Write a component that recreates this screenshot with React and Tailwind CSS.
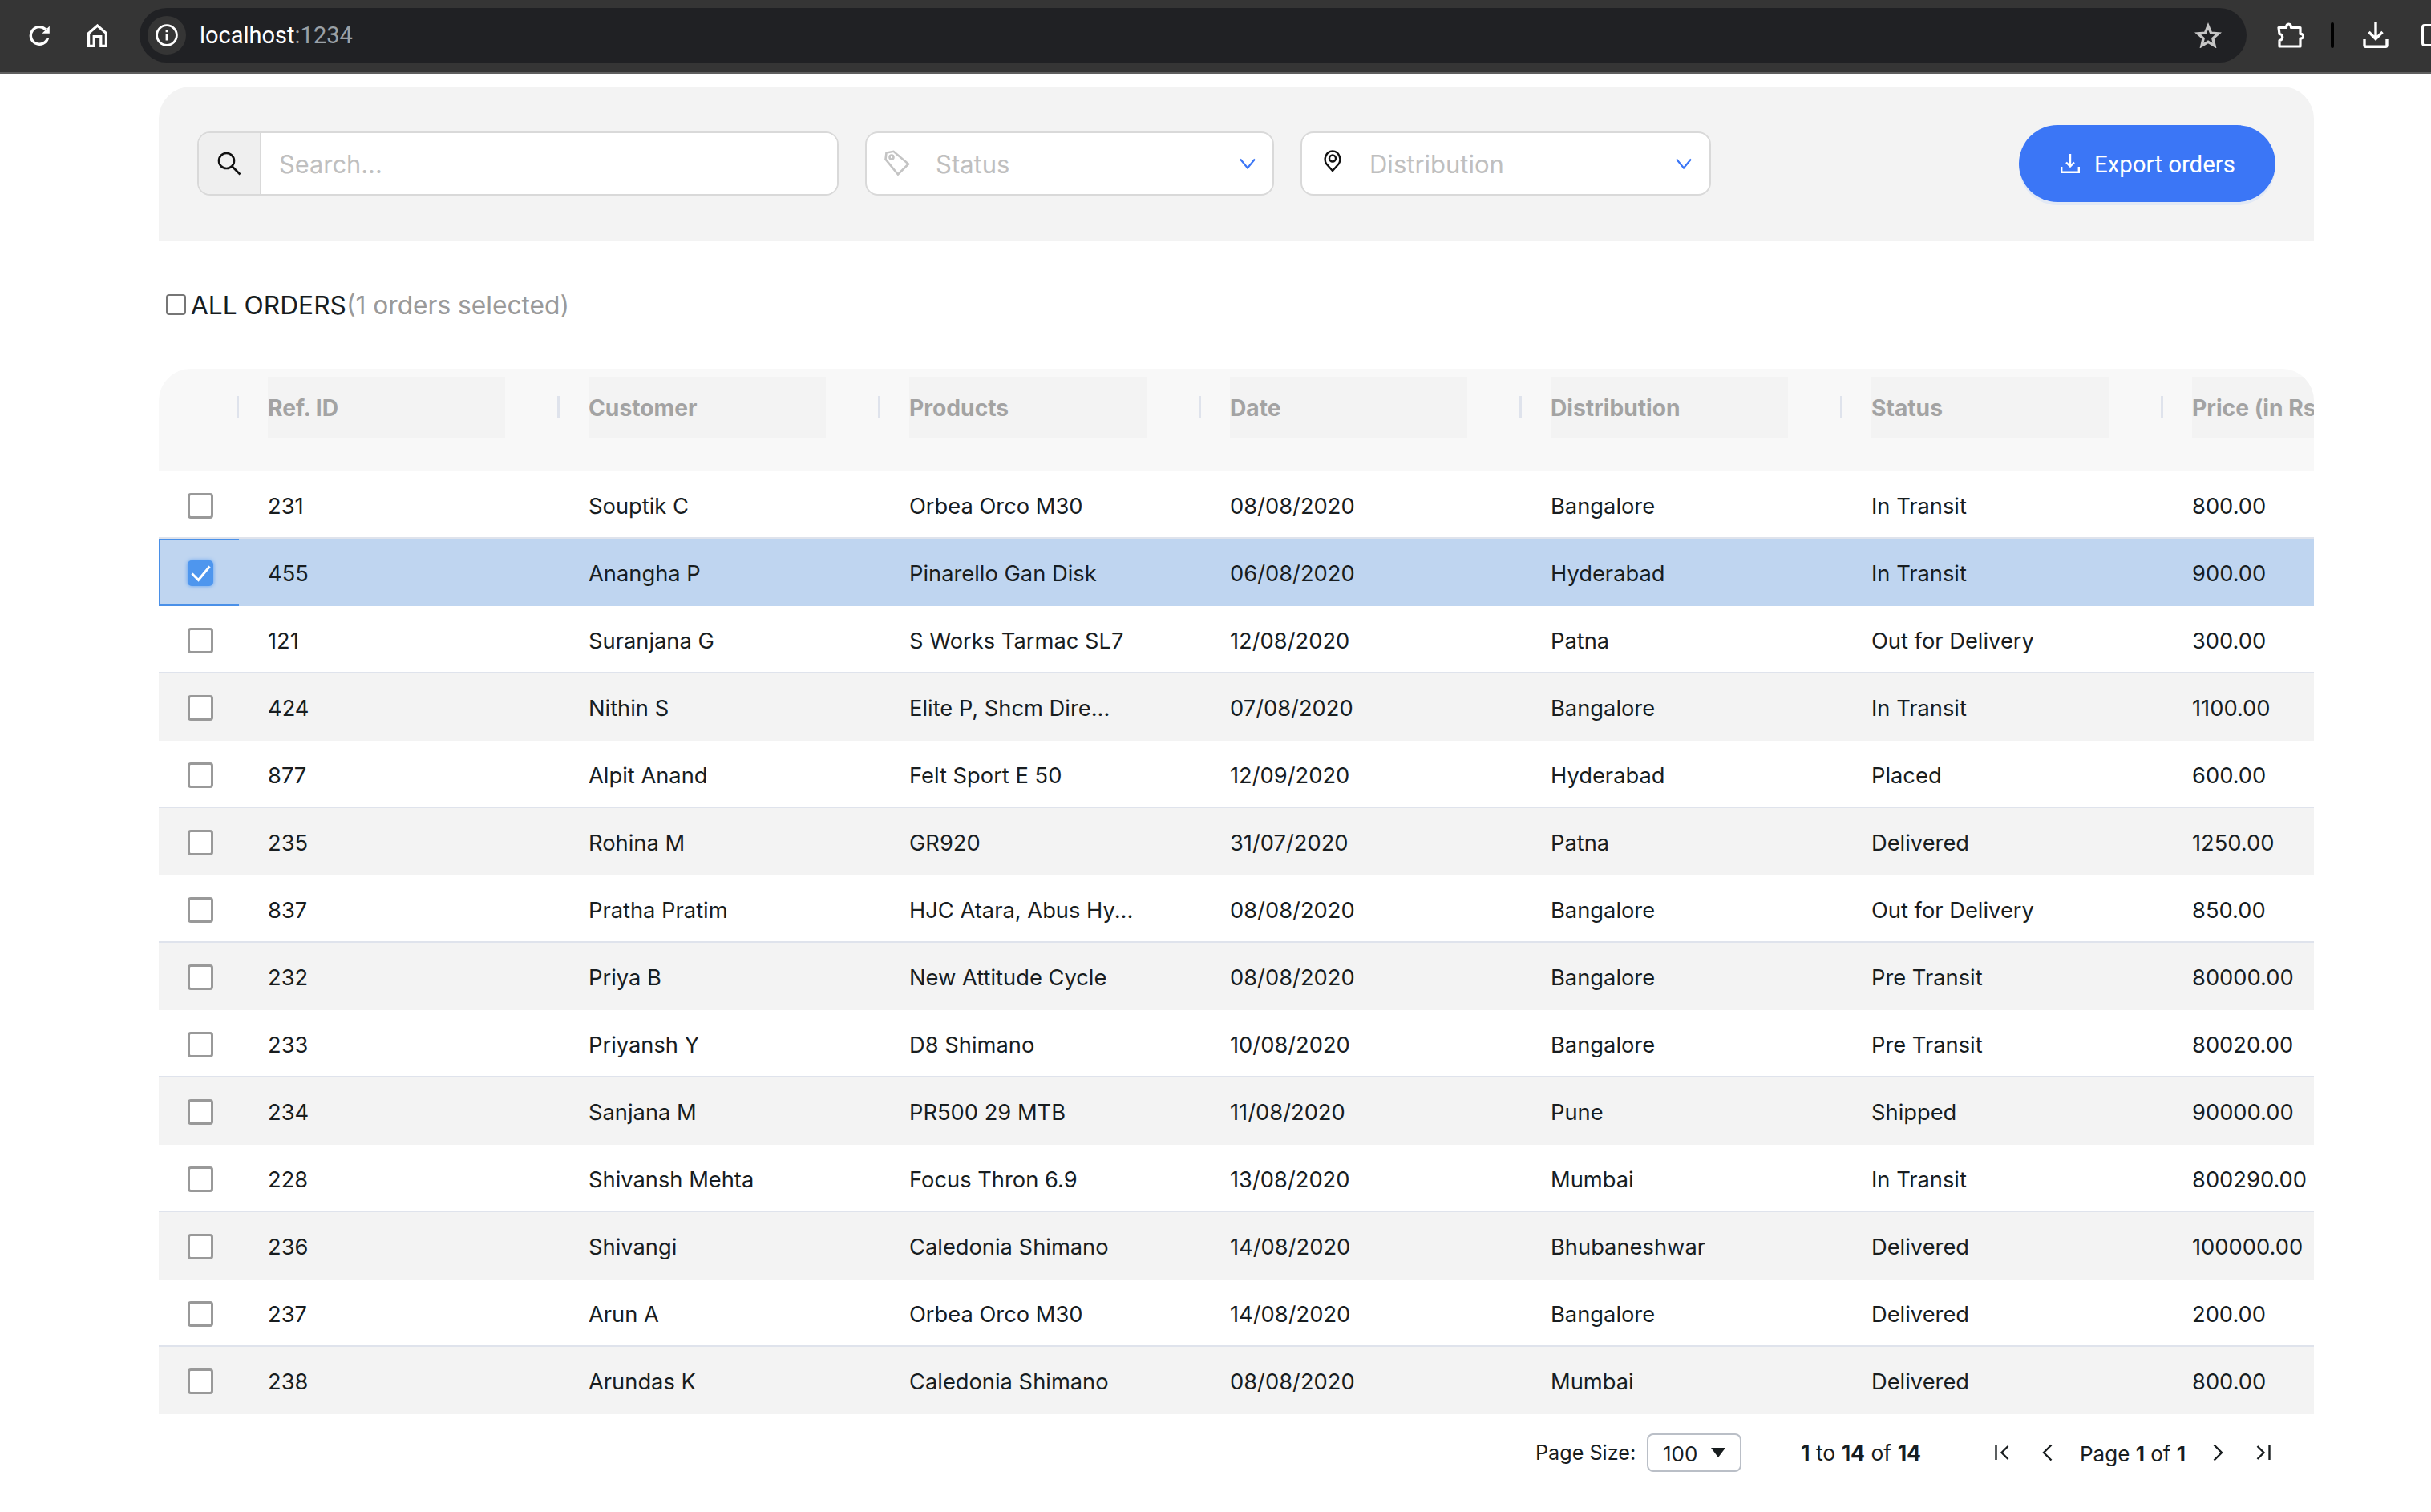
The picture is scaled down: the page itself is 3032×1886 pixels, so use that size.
const rows = [
  ["231", "Souptik C", "Orbea Orco M30", "08/08/2020", "Bangalore", "In Transit", "800.00"],
  ["455", "Anangha P", "Pinarello Gan Disk", "06/08/2020", "Hyderabad", "In Transit", "900.00"],
  ["121", "Suranjana G", "S Works Tarmac SL7", "12/08/2020", "Patna", "Out for Delivery", "300.00"],
  ["424", "Nithin S", "Elite P, Shcm Dire...", "07/08/2020", "Bangalore", "In Transit", "1100.00"],
  ["877", "Alpit Anand", "Felt Sport E 50", "12/09/2020", "Hyderabad", "Placed", "600.00"],
  ["235", "Rohina M", "GR920", "31/07/2020", "Patna", "Delivered", "1250.00"],
  ["837", "Pratha Pratim", "HJC Atara, Abus Hy...", "08/08/2020", "Bangalore", "Out for Delivery", "850.00"],
  ["232", "Priya B", "New Attitude Cycle", "08/08/2020", "Bangalore", "Pre Transit", "80000.00"],
  ["233", "Priyansh Y", "D8 Shimano", "10/08/2020", "Bangalore", "Pre Transit", "80020.00"],
  ["234", "Sanjana M", "PR500 29 MTB", "11/08/2020", "Pune", "Shipped", "90000.00"],
  ["228", "Shivansh Mehta", "Focus Thron 6.9", "13/08/2020", "Mumbai", "In Transit", "800290.00"],
  ["236", "Shivangi", "Caledonia Shimano", "14/08/2020", "Bhubaneshwar", "Delivered", "100000.00"],
  ["237", "Arun A", "Orbea Orco M30", "14/08/2020", "Bangalore", "Delivered", "200.00"],
  ["238", "Arundas K", "Caledonia Shimano", "08/08/2020", "Mumbai", "Delivered", "800.00"],
];

const headers = ["Ref. ID", "Customer", "Products", "Date", "Distribution", "Status", "Price (in Rs)"];

function Chevron({ className }) {
  return (
    <svg className={className} width="20" height="14" viewBox="0 0 20 14" fill="none" stroke="#3b76f6" strokeWidth="2.2">
      <path d="M1 1.5 10 12.5 19 1.5" />
    </svg>
  );
}

function Header() {
  return (
    <div className="flex h-[128px] w-full shrink-0 overflow-hidden rounded-t-[40px] bg-[#f8f8f8]">
      <div className="w-[136px] shrink-0 pt-[34px]">
        <div className="ml-[97px] h-[28px] w-[3px] bg-[#dfe3ec]" />
      </div>
      {headers.map((h, i) => (
        <div key={h} className="flex h-[76px] w-[400px] shrink-0 mt-[10px]">
          <div className="flex h-[76px] w-[296px] shrink-0 items-center whitespace-nowrap bg-[#f3f3f3] pt-[2px] text-[28.2px] font-bold text-[#a3a3a3]">
            {h}
          </div>
          {i < headers.length - 1 && <div className="ml-[65px] mt-[24px] h-[28px] w-[3px] bg-[#dfe3ec]" />}
        </div>
      ))}
    </div>
  );
}

function Row({ row, index }) {
  const selected = index === 1;
  const gray = index >= 3 && index % 2 === 1;
  const white = !selected && !gray;
  const bg = selected ? "bg-[#bfd5f0]" : gray ? "bg-[#f3f3f3]" : "bg-white border-b-2 border-[#dfe3ec]";
  const pad = white ? "pt-[4px]" : "pt-[2px]";

  return (
    <div className={`flex h-[84px] shrink-0 text-[27.3px] text-[#181d1f] ${bg}`}>
      <div className="w-[136px] shrink-0">
        {selected ? (
          <div className="flex h-full w-[100px] items-center border-y-2 border-l-2 border-[#4a90e8] pl-[34px] pt-[2px]">
            <div className="flex h-[32px] w-[32px] items-center justify-center rounded-[5px] bg-[#4e96ee] shadow-[0_0_5px_#5b9ef0]">
              <svg width="26" height="24" viewBox="0 0 26 24" fill="none" stroke="white" strokeWidth="3">
                <path d="M2.500 12.500 10.500 20.500 24.500 3.500" />
              </svg>
            </div>
          </div>
        ) : (
          <div className={`flex h-full items-center pl-[36px] ${pad}`}>
            <div className="h-[32px] w-[32px] rounded-[4px] border-[3px] border-[#999999] bg-white" />
          </div>
        )}
      </div>
      {row.map((cell, i) => (
        <div key={i} className={`flex w-[400px] shrink-0 items-center whitespace-nowrap ${pad}`}>
          <span className="pt-[2px]">{cell}</span>
        </div>
      ))}
    </div>
  );
}

export default function App() {
  return (
    <div className="h-[1886px] w-[3032px] overflow-hidden bg-white font-['Inter',sans-serif]">
      {/* browser bar */}
      <div className="flex h-[92px] items-center border-b-2 border-[#5f5f5f] bg-[#353535] pb-[2px] font-['Roboto',sans-serif]">
        <svg className="ml-[36px] shrink-0" width="28" height="26" viewBox="0 0 28 26" fill="none" stroke="white" strokeWidth="3.4">
          <path d="M23.5 16.5A10.8 10.8 0 1 1 21 6" />
          <path d="M25.8 1.5v9.3h-9.3z" fill="white" stroke="none" />
        </svg>
        <svg className="ml-[45px] shrink-0" width="25" height="29" viewBox="0 0 25 29" fill="none" stroke="white" strokeWidth="3.2">
          <path d="M1.6 27.4V11.5L12.5 2l10.9 9.5v15.9h-6.6V15.5H8.2v11.9z" />
        </svg>
        <div className="ml-[40px] flex h-[68px] w-[2628px] shrink-0 items-center rounded-full bg-[#202124] pl-[10px]">
          <div className="flex h-[48px] w-[48px] shrink-0 items-center justify-center rounded-full bg-[#353535]">
            <svg width="28" height="28" viewBox="0 0 28 28" fill="none" stroke="white" strokeWidth="2.8">
              <circle cx="14" cy="14" r="12.4" />
              <path d="M14 12.5v8M14 7v3.2" />
            </svg>
          </div>
          <span className="ml-[17px] pt-[2px] text-[29px] text-white">
            localhost<span className="text-[#9aa0a6]">:1234</span>
          </span>
          <svg className="ml-auto mr-[31px]" width="34" height="32" viewBox="0 0 34 32" fill="none" stroke="#c6c6c6" strokeWidth="3.4">
            <path d="m17 4.5 3.6 8.6 9.3.8-7 6.1 2.1 9.1-8-4.8-8 4.8 2.1-9.1-7-6.1 9.300-.8z" />
          </svg>
        </div>
        <svg className="ml-[38px] shrink-0" width="34" height="34" viewBox="0 0 34 34" fill="none" stroke="white" strokeWidth="3.2">
          <path d="M2 7.500h9.500c0-6 6-6 6 0H29v8c5-.5 5 6 0 5.500V31H3v-7.500c5 0 5-8 0-8z" strokeLinejoin="round" />
        </svg>
        <div className="ml-[33px] h-[32px] w-[4px] shrink-0 rounded-full bg-black" />
        <svg className="ml-[36px] shrink-0" width="32" height="32" viewBox="0 0 32 32" fill="none" stroke="white" strokeWidth="3.4">
          <path d="M16 0v20M7.500 12 16 20.500 24.500 12M2 21v7.800c0 .8.500 1.400 1.400 1.400h25.200c.9 0 1.400-.6 1.400-1.400V21" />
        </svg>
        <div className="ml-[41px] h-[28px] w-[40px] shrink-0 rounded-[4px] border-[3px] border-white" />
      </div>

      <div className="ml-[198px] w-[2688px]">
        {/* filters */}
        <div className="mt-[16px] flex h-[192px] items-center rounded-t-[40px] bg-[#f3f3f3] px-[48px]">
          <div className="flex h-[80px] w-[800px] shrink-0 overflow-hidden rounded-[16px] border-2 border-[#d9d9d9] bg-white">
            <div className="flex w-[78px] shrink-0 items-center justify-center border-r-2 border-[#d9d9d9] bg-[#efefef]">
              <svg width="30" height="30" viewBox="0 0 30 30" fill="none" stroke="#111" strokeWidth="2.6">
                <circle cx="11.500" cy="11.500" r="9.500" />
                <path d="m18.500 18.500 10 10" />
              </svg>
            </div>
            <input
              placeholder="Search..."
              className="min-w-0 flex-1 bg-white pl-[22px] pt-[2px] text-[30.8px] outline-none placeholder:text-[#bfbfbf]"
            />
          </div>

          <div className="ml-[33px] flex h-[80px] w-[510px] shrink-0 items-center rounded-[16px] border-2 border-[#d9d9d9] bg-white pl-[22px] pr-[21px] text-[31px] text-[#bfbfbf]">
            <svg className="-mt-[2px] shrink-0" width="32" height="32" viewBox="0 0 32 32" fill="none" stroke="#c4c4c4" strokeWidth="2.600">
              <path d="M2.500 3.500 11.500 1.800 30 17.500 17 30.500 1.500 11.500z" />
              <circle cx="9" cy="9" r="2.500" />
            </svg>
            <span className="ml-[32px] pt-[2px]">Status</span>
            <Chevron className="ml-auto" />
          </div>

          <div className="ml-[33px] flex h-[80px] w-[512px] shrink-0 items-center rounded-[16px] border-2 border-[#d9d9d9] bg-white pl-[27px] pr-[22px] text-[31px] text-[#bfbfbf]">
            <svg className="-mt-[6px] shrink-0" width="22" height="28" viewBox="0 0 22 28" fill="none" stroke="#111" strokeWidth="2.400">
              <path d="M11 26 3.500 17.500C-.5 12 2.500 1.500 11 1.500S22.500 12 18.500 17.500z" />
              <circle cx="11" cy="10.500" r="4" />
            </svg>
            <span className="ml-[35px] pt-[2px]">Distribution</span>
            <Chevron className="ml-auto" />
          </div>

          <button className="ml-auto flex h-[96px] w-[320px] shrink-0 items-center rounded-full bg-[#3b76f6] pl-[52px] font-['Roboto',sans-serif] text-[29.4px] text-white shadow-[0_4px_0_#e2e9f5]">
            <svg className="shrink-0" width="24" height="24" viewBox="0 0 24 24" fill="none" stroke="white" strokeWidth="2.400">
              <path d="M12 0v15M7 10.500l5 5 5-5M1.200 16v6.800h21.600V16" />
            </svg>
            <span className="ml-[18px] pt-[2px]">Export orders</span>
          </button>
        </div>

        {/* title */}
        <div className="mt-[60px] flex h-[40px] items-center text-[31.7px]">
          <div className="ml-[9px] h-[26px] w-[25px] shrink-0 rounded-[4px] border-2 border-[#767676] bg-white" />
          <span className="ml-[6px] pt-[2px] text-[#181d1f]">ALL ORDERS</span>
          <span className="pt-[2px] text-[#9a9a9a]">(1 orders selected)</span>
        </div>

        {/* table */}
        <div className="mt-[60px] flex flex-col overflow-hidden">
          <Header />
          {rows.map((row, i) => (
            <Row key={row[0]} row={row} index={i} />
          ))}
        </div>

        {/* pagination */}
        <div className="mt-[24px] flex h-[48px] items-center whitespace-nowrap pt-[0px] text-[26px] text-[#181d1f]">
          <span className="ml-[1717px] w-[125px] shrink-0 pt-[2px] text-[25.2px]">Page Size:</span>
          <div className="ml-[14px] flex h-[48px] w-[118px] shrink-0 items-center rounded-[8px] border-2 border-[#babfc7] pl-[18px]">
            <span className="pt-[2px]">100</span>
            <svg className="ml-[17px]" width="18" height="12" viewBox="0 0 18 12" fill="#181d1f">
              <path d="M0 0h18L9 12z" />
            </svg>
          </div>
          <span className="ml-[74px] w-[150px] shrink-0 pt-[2px] text-[26.5px]">
            <b className="font-bold">1</b> to <b className="font-bold">14</b> of <b className="font-bold">14</b>
          </span>
          <svg className="ml-[92px] shrink-0" width="18" height="20" viewBox="0 0 18 20" fill="none" stroke="#181d1f" strokeWidth="2.400">
            <path d="M1.500 1v18M16.500 2 8.500 10l8 8" />
          </svg>
          <svg className="ml-[41px] shrink-0" width="13" height="22" viewBox="0 0 13 22" fill="none" stroke="#181d1f" strokeWidth="2.400">
            <path d="M11.500 1.500 2 11l9.500 9.500" />
          </svg>
          <span className="ml-[34px] w-[132px] shrink-0 pt-[2px]">
            Page <b className="font-bold">1</b> of <b className="font-bold">1</b>
          </span>
          <svg className="ml-[34px] shrink-0" width="13" height="22" viewBox="0 0 13 22" fill="none" stroke="#181d1f" strokeWidth="2.400">
            <path d="M1.500 1.500 11 11l-9.500 9.500" />
          </svg>
          <svg className="ml-[41px] shrink-0" width="18" height="20" viewBox="0 0 18 20" fill="none" stroke="#181d1f" strokeWidth="2.400">
            <path d="M16.500 1v18M1.500 2l8 8-8 8" />
          </svg>
        </div>
      </div>
    </div>
  );
}
